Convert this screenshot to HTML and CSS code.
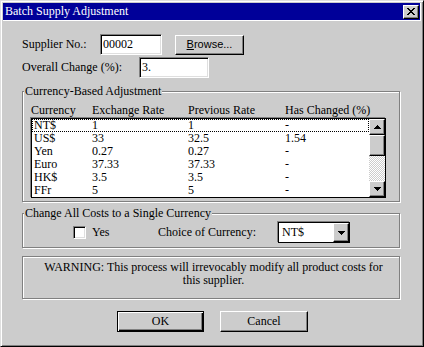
FILE: index.html
```html
<!DOCTYPE html>
<html lang="en">

<head>
    <meta charset="UTF-8">
    <meta name="viewport" content="width=device-width, initial-scale=1.0">
    <title>Batch Supply Adjustment</title>
    <link rel="stylesheet" href="styles.css">
</head>

<body>
    <article class="window">
        <header class="titlebar">
            <h1 class="title">Batch Supply Adjustment</h1>
            <button type="button" class="close btn3d" aria-label="Close">
                <svg width="8" height="7" viewBox="0 0 8 7">
                    <path d="M0 0h2v1H0zM6 0h2v1H6zM1 1h2v1H1zM5 1h2v1H5zM2 2h4v1H2zM3 3h2v1H3zM2 4h4v1H2zM1 5h2v1H1zM5 5h2v1H5zM0 6h2v1H0zM6 6h2v1H6z" />
                </svg>
            </button>
        </header>

        <form class="content">
            <div class="field-row">
                <label class="label-supplier" for="supplier">Supplier No.:</label>
                <input type="text" id="supplier" class="textbox supplier" value="00002">
                <button type="button" class="browse btn3d"><u>B</u>rowse...</button>
            </div>
            <div class="field-row">
                <label class="label-change" for="change">Overall Change (%):</label>
                <input type="text" id="change" class="textbox change" value="3.">
            </div>

            <fieldset class="group rates">
                <legend>Currency-Based Adjustment</legend>
                <div class="group-body">
                    <div class="list-head">
                        <span>Currency</span>
                        <span>Exchange Rate</span>
                        <span>Previous Rate</span>
                        <span>Has Changed (%)</span>
                    </div>
                    <div class="list">
                        <div class="list-rows">
                            <div class="row focus"><span>NT$</span><span>1</span><span>1</span><span>-</span></div>
                            <div class="row"><span>US$</span><span>33</span><span>32.5</span><span>1.54</span></div>
                            <div class="row"><span>Yen</span><span>0.27</span><span>0.27</span><span>-</span></div>
                            <div class="row"><span>Euro</span><span>37.33</span><span>37.33</span><span>-</span></div>
                            <div class="row"><span>HK$</span><span>3.5</span><span>3.5</span><span>-</span></div>
                            <div class="row"><span>FFr</span><span>5</span><span>5</span><span>-</span></div>
                        </div>
                        <div class="scrollbar">
                            <span class="sb-btn btn3d">
                                <svg width="7" height="4" viewBox="0 0 7 4">
                                    <path d="M3 0h1v1H3zM2 1h3v1H2zM1 2h5v1H1zM0 3h7v1H0z" />
                                </svg>
                            </span>
                            <span class="sb-thumb btn3d"></span>
                            <span class="sb-track"></span>
                            <span class="sb-btn btn3d">
                                <svg width="7" height="4" viewBox="0 0 7 4">
                                    <path d="M0 0h7v1H0zM1 1h5v1H1zM2 2h3v1H2zM3 3h1v1H3z" />
                                </svg>
                            </span>
                        </div>
                    </div>
                </div>
            </fieldset>

            <fieldset class="group single">
                <legend>Change All Costs to a Single Currency</legend>
                <div class="currency-row">
                    <input type="checkbox" id="single" class="checkbox">
                    <label class="yes" for="single">Yes</label>
                    <span class="choice">Choice of Currency:</span>
                    <div class="combo">
                        <span class="combo-value">NT$</span>
                        <span class="combo-btn btn3d">
                            <svg width="7" height="4" viewBox="0 0 7 4">
                                <path d="M0 0h7v1H0zM1 1h5v1H1zM2 2h3v1H2zM3 3h1v1H3z" />
                            </svg>
                        </span>
                    </div>
                </div>
            </fieldset>

            <p class="warning">
                WARNING: This process will irrevocably modify all product costs for<br>
                this supplier.
            </p>

            <div class="actions">
                <button type="button" class="ok btn3d">OK</button>
                <button type="button" class="cancel btn3d">Cancel</button>
            </div>
        </form>
    </article>
</body>

</html>
```

FILE: styles.css
```css
* {
    box-sizing: border-box;
}

body {
    margin: 0;
    background: #ccc;
    color: #000;
    font-family: "Liberation Serif", "Times New Roman", serif;
    font-size: 12px;
    line-height: 13px;
}

.window {
    width: 424px;
    height: 347px;
    padding: 2px;
    background: #ccc;
    border: 1px solid;
    border-color: #dfdfdf #000 #000 #dfdfdf;
    box-shadow: inset 1px 1px #fff, inset -1px -1px #808080;
}

.btn3d {
    background: #ccc;
    border: 1px solid;
    border-color: #fff #000 #000 #fff;
    box-shadow: inset -1px -1px #808080;
}

button {
    font: inherit;
    color: #000;
    padding: 0;
}

/* title bar */

.titlebar {
    display: flex;
    align-items: center;
    justify-content: space-between;
    height: 18px;
    padding: 0 1px 0 2px;
    background: #000099;
    color: #fff;
    border-right: 1px solid #fff;
    border-bottom: 1px solid #fff;
}

.title {
    margin: 0;
    font-size: 12px;
    font-weight: normal;
}

.close {
    display: flex;
    align-items: center;
    justify-content: center;
    width: 16px;
    height: 14px;
}

/* top fields */

.content {
    padding: 13px 21px 0 19px;
}

.field-row {
    display: flex;
    align-items: center;
    height: 21px;
}

.field-row + .field-row {
    margin-top: 2px;
}

.label-supplier {
    width: 78px;
}

.label-change {
    width: 117px;
}

.textbox {
    height: 21px;
    margin: 0;
    padding: 0 2px;
    background: #fff;
    border: 1px solid;
    border-color: #808080 #fff #fff #808080;
    box-shadow: inset 1px 1px #000, inset -1px -1px #dfdfdf;
    font: inherit;
    outline: none;
}

.supplier {
    width: 62px;
}

.change {
    width: 70px;
}

.browse {
    width: 69px;
    height: 20px;
    margin-left: 13px;
    font-family: "Liberation Sans", Arial, sans-serif;
    font-size: 11px;
}

/* group boxes */

.group {
    margin: 7px 0 0;
    padding: 6px 0 3px;
    min-width: 0;
    border: 1px solid #808080;
    box-shadow: inset 1px 1px #fff, 1px 1px #fff;
}

.group legend {
    margin-left: 1px;
    padding: 0 1px;
    line-height: 13px;
    background: #ccc;
}

.group-body {
    padding: 0 13px 0 8px;
}

.list-head,
.row {
    display: grid;
    grid-template-columns: 61px 96px 97px 1fr;
    height: 13px;
    white-space: nowrap;
}

.row {
    grid-template-columns: 60px 96px 97px 1fr;
}

.row span:first-child {
    padding-left: 2px;
}

.row.focus {
    outline: 1px dotted #000;
    outline-offset: -1px;
}

.list {
    display: flex;
    height: 80px;
    margin-top: 1px;
    background: #fff;
    border: 1px solid #000;
    box-shadow: -1px -1px #808080;
}

.list-rows {
    flex: 1;
}

.scrollbar {
    display: flex;
    flex-direction: column;
    width: 16px;
}

.sb-btn {
    display: flex;
    align-items: center;
    justify-content: center;
    height: 16px;
}

.sb-thumb {
    height: 21px;
}

.sb-track {
    flex: 1;
    background: repeating-conic-gradient(#fff 0 25%, #ccc 0 50%) 0 0 / 2px 2px;
}

.single {
    margin-top: 5px;
    padding: 2px 0 4px;
}

.currency-row {
    display: flex;
    align-items: center;
    height: 21px;
    padding-left: 50px;
}

.checkbox {
    appearance: none;
    width: 13px;
    height: 13px;
    margin: 0;
    background: #fff;
    border: 1px solid;
    border-color: #808080 #fff #fff #808080;
    box-shadow: inset 1px 1px #000, inset -1px -1px #dfdfdf;
}

.yes {
    width: 66px;
    margin-left: 6px;
}

.choice {
    width: 120px;
}

.combo {
    display: flex;
    align-items: center;
    width: 72px;
    height: 21px;
    background: #fff;
    border: 1px solid #000;
    box-shadow: -1px -1px #808080;
}

.combo-value {
    padding-left: 3px;
}

.combo-btn {
    display: flex;
    align-items: center;
    justify-content: center;
    width: 16px;
    height: 19px;
    margin-left: auto;
}

/* warning and buttons */

.warning {
    margin: 8px 0 0;
    padding: 4px 0 11px 5px;
    text-align: center;
    border: 1px solid #808080;
    box-shadow: inset 1px 1px #fff, 1px 1px #fff;
}

.actions {
    display: flex;
    justify-content: center;
    gap: 16px;
    margin-top: 12px;
    padding-left: 3px;
}

.ok,
.cancel {
    height: 21px;
}

.ok {
    width: 87px;
    border-color: #000;
    box-shadow: inset 1px 1px #fff, inset -1px -1px #000, inset -2px -2px #808080;
}

.cancel {
    width: 88px;
}
```
